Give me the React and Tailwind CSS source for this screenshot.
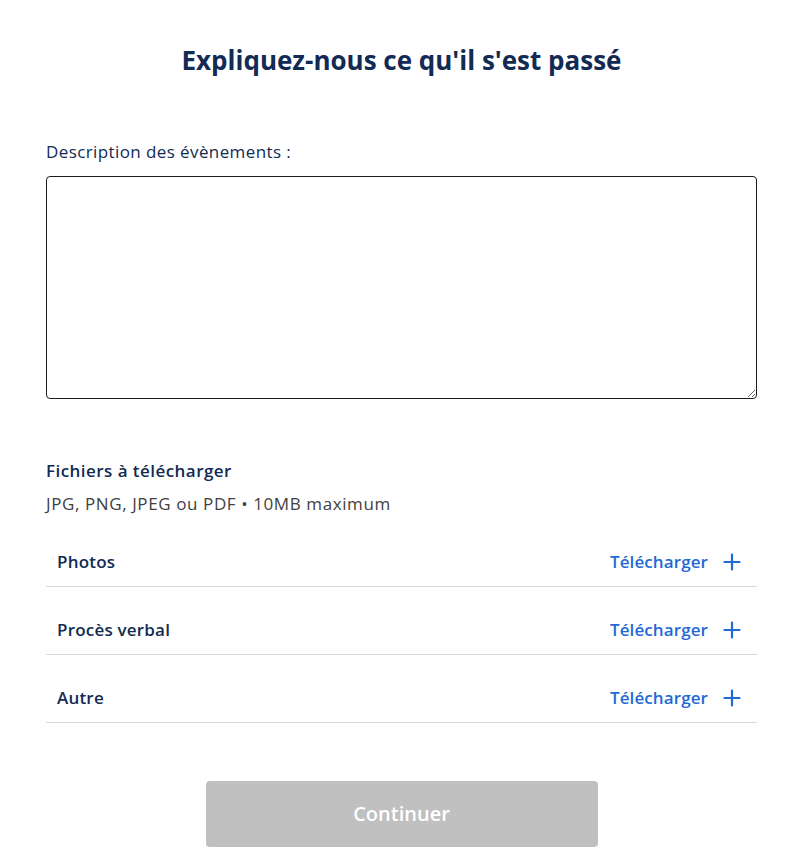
import React from "react";

function Plus() {
  return (
    <svg width="18" height="18" viewBox="0 0 18 18" fill="none">
      <path d="M9 1.5v15M1.5 9h15" stroke="#1f6ad3" strokeWidth="2.2" strokeLinecap="round" />
    </svg>
  );
}

function Row({ label }) {
  return (
    <div className="flex items-center justify-between h-[68px] border-b border-[#d9d9d9] pl-[11px] pr-[16px] pt-[18px]">
      <span className="text-[17px] font-semibold text-[#122b54] tracking-[0.2px]">{label}</span>
      <div className="flex items-center gap-[15px]">
        <span className="text-[17px] font-semibold text-[#1f6ad3] tracking-[0.1px]">Télécharger</span>
        <Plus />
      </div>
    </div>
  );
}

export default function App() {
  return (
    <div className="w-[807px] min-h-[858px] bg-white" style={{ fontFamily: "'Open Sans', sans-serif" }}>
      <div className="ml-[46px] w-[711px] flex flex-col">
        <h1 className="text-center text-[26px] font-bold text-[#122b54] mt-[42px] leading-[36px]">
          Expliquez-nous ce qu'il s'est passé
        </h1>
        <label className="mt-[62px] text-[17px] text-[#122b54] leading-[24px] tracking-[0.4px]">Description des évènements :</label>
        <textarea className="mt-[12px] h-[223px] w-full border border-[#1a1a1a] rounded-[4px] p-3 text-[16px]" />
        <div className="mt-[60px] text-[17px] font-semibold text-[#122b54] leading-[24px] tracking-[0.45px]">Fichiers à télécharger</div>
        <div className="mt-[9px] text-[17px] font-normal text-[#414141] leading-[24px] tracking-[0.6px]">JPG, PNG, JPEG ou PDF • 10MB maximum</div>
        <div className="mt-[3px] flex flex-col">
          <Row label="Photos" />
          <Row label="Procès verbal" />
          <Row label="Autre" />
        </div>
        <div className="flex justify-center mt-[58px]">
          <button className="w-[392px] h-[66px] bg-[#c0c0c0] rounded-[4px] text-white text-[20px] font-semibold">
            Continuer
          </button>
        </div>
      </div>
    </div>
  );
}
